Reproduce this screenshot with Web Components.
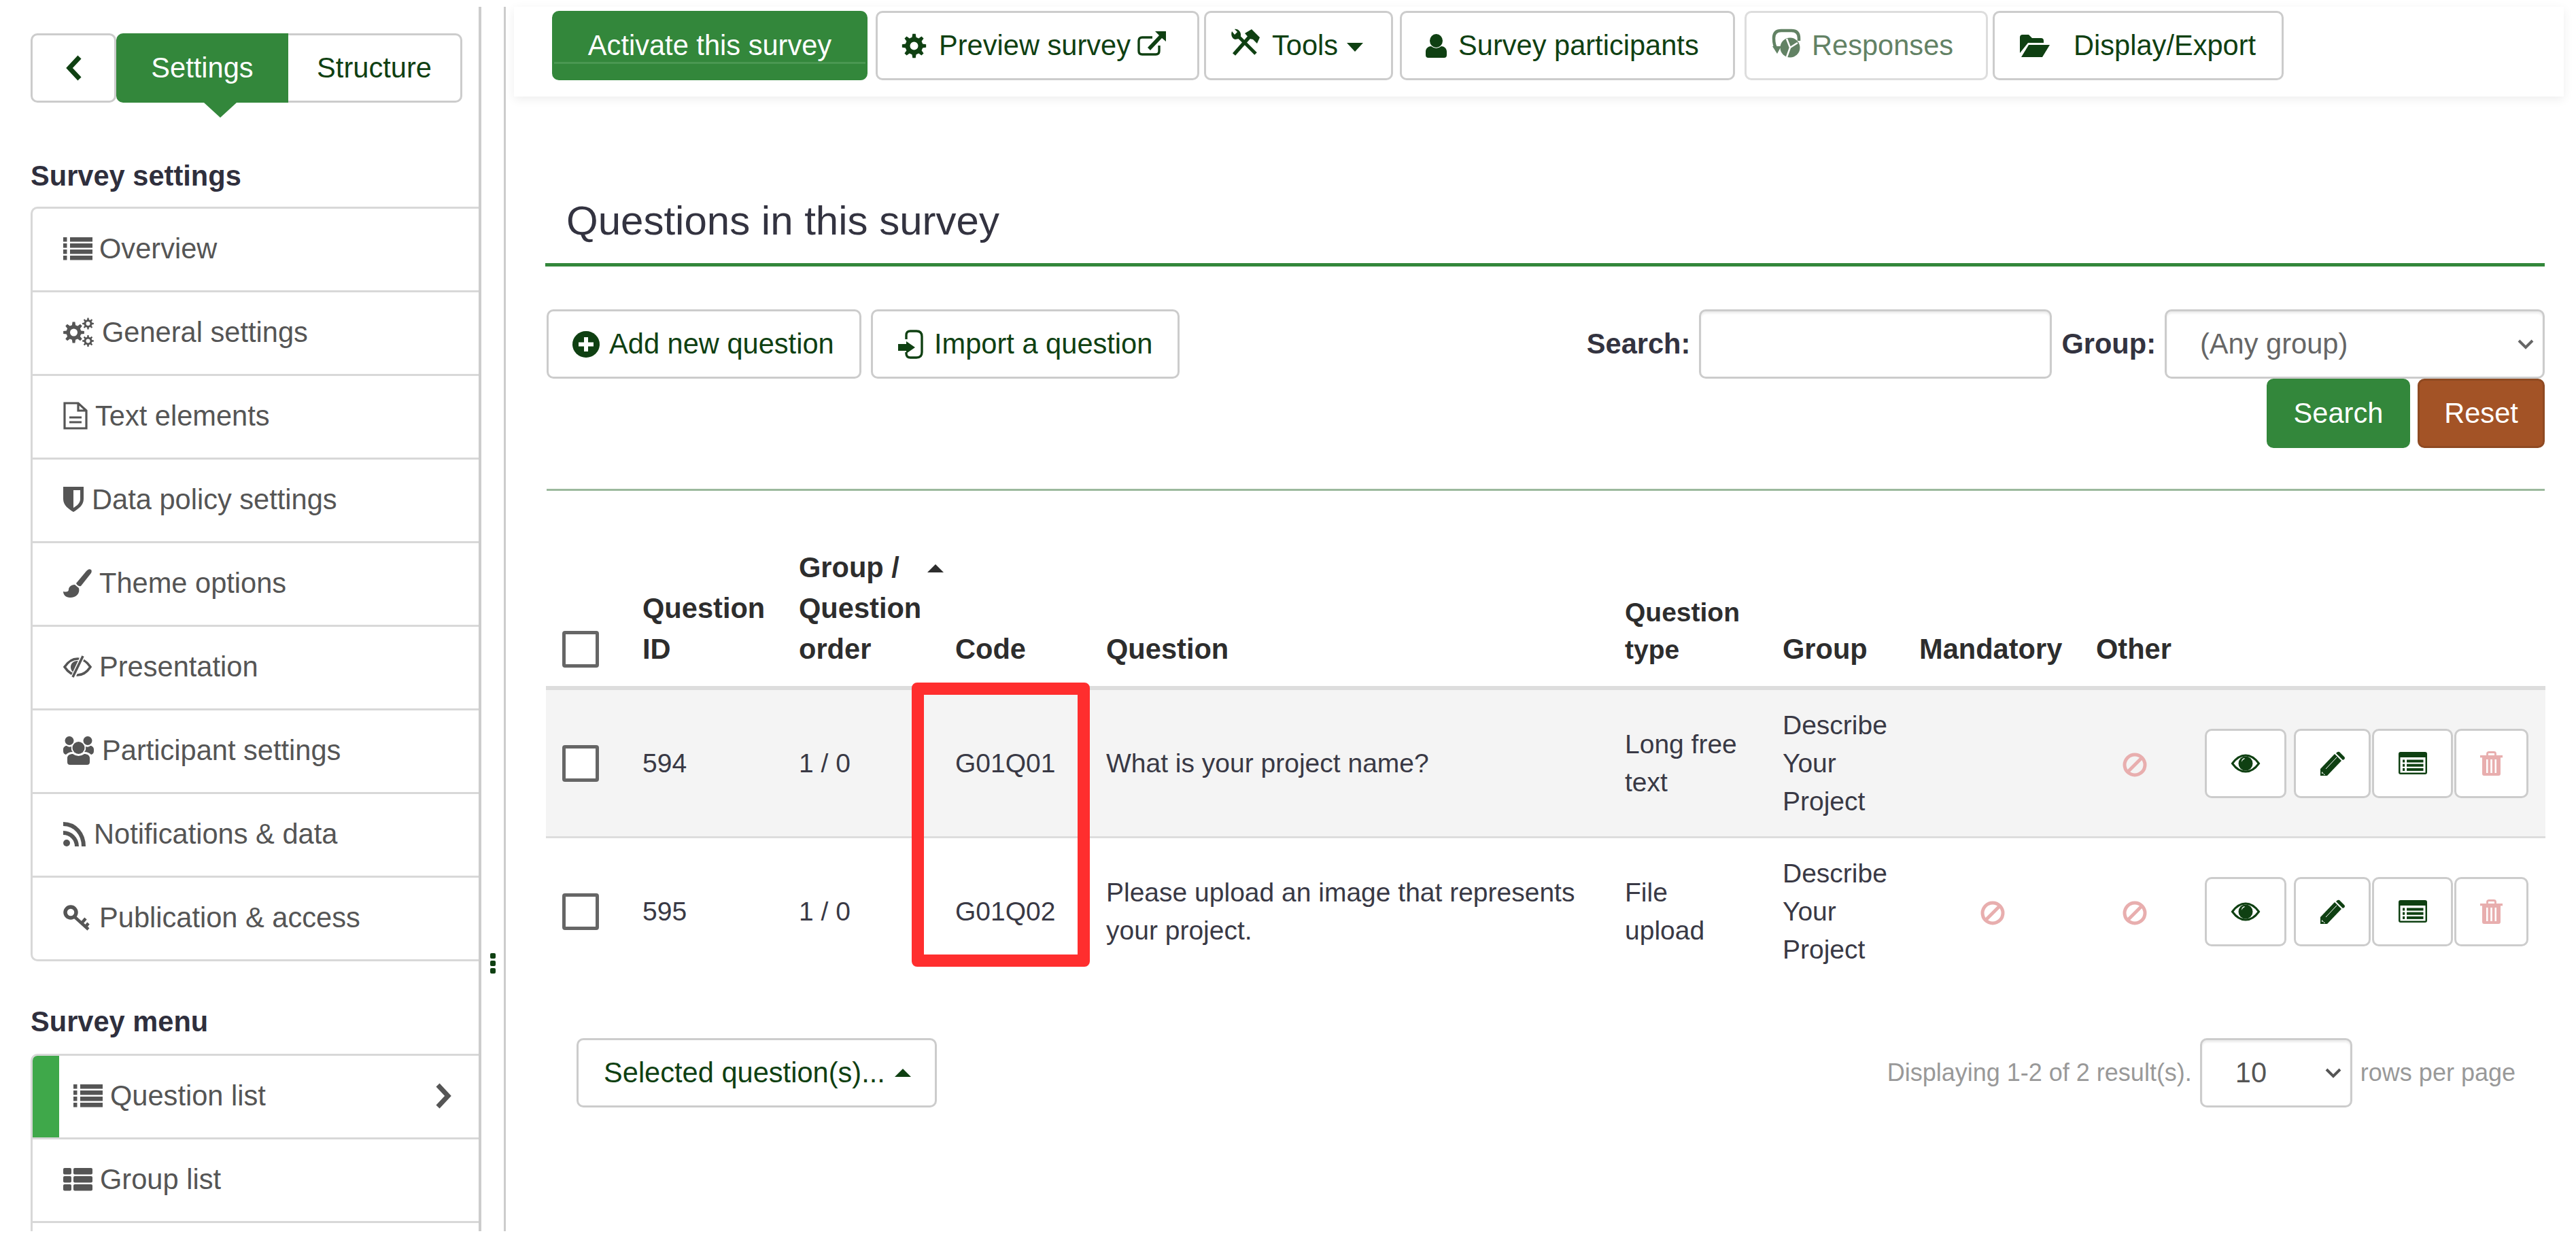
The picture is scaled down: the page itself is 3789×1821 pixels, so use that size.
<!DOCTYPE html>
<html lang="en">
<head>
<meta charset="utf-8">
<title>Questions in this survey</title>
<style>
  html, body { margin: 0; padding: 0; background: #fff; }
  body { font: 41.6px/60px "Liberation Sans", Arial, sans-serif; color: #333340; overflow: hidden; }
</style>
</head>
<body>
<ls-app></ls-app>
<script>
// gear outline used by the cog icons
function gear(cx, cy, R, r, n, hole) {
  const step = Math.PI * 2 / n;
  const pts = [];
  for (let i = 0; i < n; i++) {
    const a = step * i;
    [[-0.30, r], [-0.16, R], [0.16, R], [0.30, r]].forEach(([off, rad]) => {
      pts.push((cx + Math.cos(a + off * step) * rad).toFixed(2) + ' ' + (cy + Math.sin(a + off * step) * rad).toFixed(2));
    });
  }
  return 'M' + pts.join('L') + 'Z' +
    `M${cx - hole} ${cy}a${hole} ${hole} 0 1 0 ${hole * 2} 0a${hole} ${hole} 0 1 0 ${-hole * 2} 0Z`;
}

function rows(count, fn) {
  return Array.from({ length: count }, (_, i) => fn(i)).join('');
}

const ICONS = {
  list: [43, 33, rows(4, i => `<rect x="0" y="${i * 9}" width="5.5" height="6.5"/><rect x="10" y="${i * 9}" width="33" height="6.5"/>`)],
  thlist: [43, 33, rows(3, i => `<rect x="0" y="${i * 12}" width="12" height="9.5" rx="2"/><rect x="15" y="${i * 12}" width="28" height="9.5" rx="2"/>`)],
  gears: [45, 42, `<path fill-rule="evenodd" d="${gear(15.5, 21, 15.5, 11, 8, 5.5)}"/><path fill-rule="evenodd" d="${gear(36.5, 8, 8.5, 6, 8, 3)}"/><path fill-rule="evenodd" d="${gear(36.5, 33.5, 8.5, 6, 8, 3)}"/>`],
  doc: [36, 41, `<path fill="none" stroke="currentColor" stroke-width="3.2" d="M2 2H22L34 13V39H2ZM22 2V13H34M9 23H27M9 30H27"/>`],
  shield: [30, 37, `<path fill-rule="evenodd" d="M0 0H30V18C30 27 22 33 15 37C8 33 0 27 0 18ZM15 5V31C20 28 25 24 25 18V5Z"/>`],
  brush: [42, 42, `<path d="M41 1C38-1 36 1 34 3L19 21C21 25 24 26 26 25L41 6C42 4 42 2 41 1Z"/><path d="M17 23C11 23 8 27 8 30C8 34 4 34 0 33C0 38 4 42 10 42C19 42 25 36 23 28Z"/>`],
  eyeslash: [42, 31, `<path fill="none" stroke="currentColor" stroke-width="3.6" d="M2 16C8 7 15 4 21 4C27 4 34 7 40 16C34 25 27 28 21 28C15 28 8 25 2 16Z"/><path d="M21 7C15 7 11 11 11 16C11 19 12 22 15 24L25 7Z"/><path stroke="#fff" stroke-width="7" d="M28 2L15 30"/><path stroke="currentColor" stroke-width="3.6" d="M29 0L14 31"/>`],
  users: [45, 43, `<circle cx="22.5" cy="18" r="9"/><circle cx="9" cy="7.5" r="6.5"/><circle cx="36" cy="7.5" r="6.5"/><path d="M6 39V33C6 29 10 27 14 27Q22.5 33 31 27C35 27 39 29 39 33V39Q39 43 35 43H10Q6 43 6 39Z"/><path d="M0 23V20C0 17 3 15 5 15Q9 18 12 16Q11 21 14 24C9 24 6 26 4 28Q0 27 0 23Z"/><path d="M45 23V20C45 17 42 15 40 15Q36 18 33 16Q34 21 31 24C36 24 39 26 41 28Q45 27 45 23Z"/>`],
  rss: [33, 36, `<circle cx="5" cy="31" r="5"/><path fill="none" stroke="currentColor" stroke-width="6" d="M0 16C11 16 20 25 20 36M0 3C18 3 30 18 30 36"/>`],
  key: [39, 37, `<circle cx="11" cy="11" r="8" fill="none" stroke="currentColor" stroke-width="5.5"/><path fill="none" stroke="currentColor" stroke-width="4.5" d="M16 17L37 36M27 27L33 20M33 32L37 27"/>`],
  chevronleft: [24, 38, `<path fill="none" stroke="currentColor" stroke-width="7" d="M21 3L6 19L21 35"/>`],
  chevronright: [25, 38, `<path fill="none" stroke="currentColor" stroke-width="7" d="M4 3L19 19L4 35"/>`],
  cog: [37, 35, `<path fill-rule="evenodd" d="${gear(18.5, 17.5, 17.8, 13, 8, 6)}"/>`],
  external: [42, 36, `<path fill="none" stroke="currentColor" stroke-width="3.4" d="M22 9H7Q2 9 2 14V29Q2 34 7 34H27Q32 34 32 29V21"/><path d="M26 0H42V15L36 10L19 28L15 24L32 6Z"/>`],
  // crossed hammer and wrench
  tools: [42, 40, `<path fill="none" stroke="currentColor" stroke-width="5.5" d="M4 37L27 11"/><path d="M20 6L30 0L42 12L38 21L32 15L27 14Z"/><path fill="none" stroke="currentColor" stroke-width="5" d="M11 11L36 36"/><path d="M1 3L5 8L9 4L5 0C10-1 15 4 14 10L11 14L6 15C1 14-1 8 1 3Z"/>`],
  caretdown: [24, 13, `<path d="M0 0H24L12 13Z"/>`],
  caretup: [24, 12, `<path d="M12 0L24 12H0Z"/>`],
  user: [31, 35, `<ellipse cx="15.5" cy="10" rx="9.5" ry="10"/><path d="M0 31V26C0 21 4 18 8 18Q15.5 24 23 18C27 18 31 21 31 26V31Q31 35 27 35H4Q0 35 0 31Z"/>`],
  responses: [43, 42, `<path fill="none" stroke="currentColor" stroke-width="4.5" d="M8 31C4 27 3 21 3 14Q3 3 14 3H29Q40 3 40 14V18"/><path d="M1 26H14L8 37Z"/><circle cx="27" cy="28" r="14.5"/><path fill="none" stroke="#fff" stroke-width="2.5" d="M27 28L22 15M27 28L38 21M27 28L22 42"/>`],
  folder: [44, 33, `<path d="M0 27V4Q0 0 4 0H13L18 5H31Q35 5 35 9V12H12Z"/><path d="M2 33L13 15H44L33 33Z"/>`],
  plus: [40, 39, `<ellipse cx="20" cy="19.5" rx="20" ry="19.5"/><path fill="#fff" d="M17 9H23V16.5H31V22.5H23V30H17V22.5H9V16.5H17Z"/>`],
  importq: [37, 43, `<path fill="none" stroke="currentColor" stroke-width="3.4" d="M12 14V8Q12 2 18 2H27Q35 2 35 10V33Q35 41 27 41H18Q12 41 12 35V33"/><path d="M0 21H12V17L25 26L12 35V31H0Z"/>`],
  eye: [42, 28, `<path fill="none" stroke="currentColor" stroke-width="3" d="M1.5 14C8 5 15 2 21 2C27 2 34 5 40.5 14C34 23 27 26 21 26C15 26 8 23 1.5 14Z"/><circle cx="21" cy="14" r="10.5"/><path fill="#fff" d="M19 6C16 7 15 9 15 12C16 10 17 8 20 7Z"/>`],
  pencil: [36, 36, `<path d="M0 36V26L21 4L31 14L10 36Z"/><path d="M24 2Q26 0 28 1L35 8Q37 10 35 12L33 13L23 3Z"/><path fill="#fff" d="M2 30L7 35H5V32L2 33Z"/><path stroke="#fff" d="M8 26L24 9"/>`],
  listalt: [42, 33, `<rect width="42" height="33" rx="3"/><rect x="2.5" y="8" width="37" height="22.5" fill="#fff"/>` + rows(3, i => `<rect x="6" y="${11.5 + i * 6.2}" width="3.2" height="4"/><rect x="12" y="${11.5 + i * 6.2}" width="24.5" height="4"/>`)],
  trash: [33, 36, `<rect y="6" width="33" height="3.4"/><path fill="none" stroke="currentColor" stroke-width="2.8" d="M10.5 6V3.5Q10.5 1.5 13 1.5H20Q22.5 1.5 22.5 3.5V6"/><path fill-rule="evenodd" d="M3 9H30V33Q30 36 27 36H6Q3 36 3 33ZM9 12V32H11.5V12ZM15.2 12V32H17.8V12ZM21.5 12V32H24V12Z"/>`],
  ban: [36, 36, `<circle cx="18" cy="18" r="15" fill="none" stroke="currentColor" stroke-width="5"/><path stroke="currentColor" stroke-width="5" d="M28 8L8 28"/>`],
  chevrondown: [24, 15, `<path fill="none" stroke="currentColor" stroke-width="4" d="M2 2L12 12L22 2"/>`]
};

class LsIcon extends HTMLElement {
  constructor() {
    super();
    this.attachShadow({ mode: 'open' });
  }

  connectedCallback() {
    const [w, h, body] = ICONS[this.getAttribute('name')];
    this.shadowRoot.innerHTML = `
      <style>
        :host { display: inline-flex; flex: none; }
        svg { display: block; fill: currentColor; overflow: visible; }
      </style>
      <svg width="${w}" height="${h}" viewBox="0 0 ${w} ${h}">${body}</svg>
    `;
  }
}

class LsBtn extends HTMLElement {
  constructor() {
    super();
    this.attachShadow({ mode: 'open' });
  }

  connectedCallback() {
    this.shadowRoot.innerHTML = `
      <style>
        :host {
          display: inline-flex;
          flex: none;
          position: relative;
          box-sizing: border-box;
          height: 102px;
          align-items: center;
          padding: 0 37px;
          border: 3px solid #ccc;
          border-radius: 10px;
          background: #fff;
          color: #0f4012;
          white-space: nowrap;
        }
        :host([variant="primary"]) { background: #33873b; border-color: #33873b; color: #fff; }
        :host([variant="reset"]) { background: #a35326; border-color: #8f4a22; color: #fff; }
        :host([disabled]) { opacity: .65; }
        :host([centered]) { justify-content: center; padding: 0; }
        :host([underlined])::after {
          content: "";
          position: absolute;
          left: 0;
          right: 0;
          top: 72px;
          height: 3px;
          background: #4a9751;
        }
      </style>
      <slot></slot>
    `;
  }
}

class LsSelect extends HTMLElement {
  constructor() {
    super();
    this.attachShadow({ mode: 'open' });
  }

  connectedCallback() {
    this.shadowRoot.innerHTML = `
      <style>
        :host {
          display: flex;
          flex: none;
          box-sizing: border-box;
          height: 102px;
          align-items: center;
          justify-content: space-between;
          padding: 0 13px 0 49px;
          border: 3px solid #ccc;
          border-radius: 10px;
          background: #fff;
          box-shadow: inset 0 3px 3px rgba(0, 0, 0, .075);
          color: #666;
        }
      </style>
      <span><slot></slot></span>
      <ls-icon name="chevrondown"></ls-icon>
    `;
  }
}

class LsMenuItem extends HTMLElement {
  constructor() {
    super();
    this.attachShadow({ mode: 'open' });
  }

  connectedCallback() {
    const active = this.hasAttribute('active');
    this.shadowRoot.innerHTML = `
      <style>
        :host {
          display: flex;
          box-sizing: border-box;
          height: 123px;
          padding-bottom: 3px;
          align-items: center;
          border-bottom: 3px solid #d8d8d8;
          color: #555;
        }
        :host(:last-child) { border-bottom: 0; height: 120px; }
        .bar { align-self: stretch; width: 39px; margin-bottom: -3px; background: #3fa84a; margin-right: 21px; }
        .lead { width: 45px; }
        .arrow { margin-left: auto; margin-right: 39px; }
        ls-icon { margin-right: ${this.getAttribute('gap') || 10}px; }
      </style>
      ${active ? '<span class="bar"></span>' : '<span class="lead"></span>'}
      <ls-icon name="${this.getAttribute('icon')}"></ls-icon>
      <span><slot></slot></span>
      ${active ? '<ls-icon class="arrow" name="chevronright"></ls-icon>' : ''}
    `;
  }
}

class LsMenuList extends HTMLElement {
  constructor() {
    super();
    this.attachShadow({ mode: 'open' });
  }

  connectedCallback() {
    this.shadowRoot.innerHTML = `
      <style>
        :host {
          display: block;
          border: 3px solid #d8d8d8;
          border-right: 0;
          border-radius: 10px 0 0 10px;
          overflow: hidden;
        }
      </style>
      <slot></slot>
    `;
  }
}

class LsSidebar extends HTMLElement {
  constructor() {
    super();
    this.attachShadow({ mode: 'open' });
  }

  connectedCallback() {
    this.shadowRoot.innerHTML = `
      <style>
        :host {
          display: block;
          flex: none;
          box-sizing: border-box;
          width: 708px;
          height: 100%;
          padding: 39px 0 0 45px;
          border-right: 4px solid #ccc;
          overflow: hidden;
        }
        .switch { display: flex; height: 102px; }
        .back { width: 126px; justify-content: center; padding: 0; }
        .settings { width: 253px; border-radius: 10px 0 0 10px; justify-content: center; padding: 0; }
        .settings-wrap { position: relative; display: flex; }
        .pointer {
          position: absolute;
          left: 129px;
          top: 102px;
          width: 0;
          height: 0;
          border-left: 24px solid transparent;
          border-right: 24px solid transparent;
          border-top: 22px solid #33873b;
        }
        .structure { width: 256px; border-left: 0; border-radius: 0 10px 10px 0; justify-content: center; padding: 0; }
        h4 { margin: 78px 0 15px; font-size: 41.6px; line-height: 60px; font-weight: bold; color: #2f2f3d; }
        h4.second { margin-top: 59px; margin-bottom: 17px; }
      </style>
      <div class="switch">
        <ls-btn class="back"><ls-icon name="chevronleft"></ls-icon></ls-btn>
        <div class="settings-wrap">
          <ls-btn class="settings" variant="primary">Settings</ls-btn>
          <span class="pointer"></span>
        </div>
        <ls-btn class="structure">Structure</ls-btn>
      </div>
      <h4>Survey settings</h4>
      <ls-menu-list>
        <ls-menu-item icon="list" gap="10">Overview</ls-menu-item>
        <ls-menu-item icon="gears" gap="12">General settings</ls-menu-item>
        <ls-menu-item icon="doc" gap="11">Text elements</ls-menu-item>
        <ls-menu-item icon="shield" gap="12">Data policy settings</ls-menu-item>
        <ls-menu-item icon="brush" gap="11">Theme options</ls-menu-item>
        <ls-menu-item icon="eyeslash" gap="11">Presentation</ls-menu-item>
        <ls-menu-item icon="users" gap="12">Participant settings</ls-menu-item>
        <ls-menu-item icon="rss" gap="12">Notifications &amp; data</ls-menu-item>
        <ls-menu-item icon="key" gap="14">Publication &amp; access</ls-menu-item>
      </ls-menu-list>
      <h4 class="second">Survey menu</h4>
      <ls-menu-list>
        <ls-menu-item icon="list" gap="11" active>Question list</ls-menu-item>
        <ls-menu-item icon="thlist" gap="11">Group list</ls-menu-item>
        <ls-menu-item icon="thlist" gap="11"></ls-menu-item>
      </ls-menu-list>
    `;
  }
}

class LsHandle extends HTMLElement {
  constructor() {
    super();
    this.attachShadow({ mode: 'open' });
  }

  connectedCallback() {
    this.shadowRoot.innerHTML = `
      <style>
        :host {
          display: flex;
          flex: none;
          flex-direction: column;
          align-items: center;
          gap: 3px;
          box-sizing: border-box;
          width: 36px;
          height: 100%;
          padding: 1392px 0 0 0;
          border-right: 3px solid #ccc;
        }
        i { display: block; width: 8px; height: 8px; border-radius: 2px; background: #0f4012; }
      </style>
      <i></i><i></i><i></i>
    `;
  }
}

class LsTopbar extends HTMLElement {
  constructor() {
    super();
    this.attachShadow({ mode: 'open' });
  }

  connectedCallback() {
    this.shadowRoot.innerHTML = `
      <style>
        :host {
          display: flex;
          box-sizing: border-box;
          height: 132px;
          margin: 0 18px 0 12px;
          padding: 6px 0 0 56px;
          background: #fff;
          box-shadow: 0 4px 14px rgba(0, 0, 0, .07);
        }
      </style>
      <ls-btn variant="primary" underlined centered style="width:464px">Activate this survey</ls-btn>
      <ls-btn style="width:476px;margin-left:12px;padding-left:35px">
        <ls-icon name="cog" style="margin-right:18px"></ls-icon>Preview survey<ls-icon name="external" style="margin:-6px 0 0 10px"></ls-icon>
      </ls-btn>
      <ls-btn style="width:278px;margin-left:7px">
        <ls-icon name="tools" style="margin:-8px 18px 0 0"></ls-icon>Tools<ls-icon name="caretdown" style="margin:4px 0 0 13px"></ls-icon>
      </ls-btn>
      <ls-btn style="width:493px;margin-left:10px;padding-left:35px">
        <ls-icon name="user" style="margin-right:17px"></ls-icon>Survey participants
      </ls-btn>
      <ls-btn disabled style="width:358px;margin-left:14px">
        <ls-icon name="responses" style="margin:-8px 16px 0 0"></ls-icon>Responses
      </ls-btn>
      <ls-btn style="width:428px;margin-left:7px">
        <ls-icon name="folder" style="margin-right:35px"></ls-icon>Display/Export
      </ls-btn>
    `;
  }
}

const QUESTIONS = [
  { id: '594', order: '1 / 0', code: 'G01Q01', title: 'What is your project name?', type: 'Long free text', mandatory: false },
  { id: '595', order: '1 / 0', code: 'G01Q02', title: 'Please upload an image that represents your project.', type: 'File upload', mandatory: true }
];

class LsQuestionTable extends HTMLElement {
  constructor() {
    super();
    this.attachShadow({ mode: 'open' });
  }

  connectedCallback() {
    const body = QUESTIONS.map(q => `
      <tr>
        <td class="check"><span class="box"></span></td>
        <td>${q.id}</td>
        <td>${q.order}</td>
        <td>${q.code}</td>
        <td>${q.title}</td>
        <td>${q.type}</td>
        <td>Describe Your Project</td>
        <td class="mid">${q.mandatory ? '<ls-icon class="off" name="ban"></ls-icon>' : ''}</td>
        <td class="mid"><ls-icon class="off" name="ban"></ls-icon></td>
        <td class="actions">
          <div>
            <ls-btn centered style="width:120px;margin-right:11px"><ls-icon name="eye"></ls-icon></ls-btn>
            <ls-btn centered style="width:113px;margin-right:2px"><ls-icon name="pencil"></ls-icon></ls-btn>
            <ls-btn centered style="width:119px;margin-right:2px"><ls-icon name="listalt"></ls-icon></ls-btn>
            <ls-btn centered style="width:109px"><ls-icon class="off" name="trash"></ls-icon></ls-btn>
          </div>
        </td>
      </tr>
    `).join('');

    this.shadowRoot.innerHTML = `
      <style>
        :host { display: block; position: relative; width: 2941px; margin: 83px 0 0 1px; }
        table { width: 100%; table-layout: fixed; border-collapse: separate; border-spacing: 0; }
        th {
          padding: 0 22px 24px;
          text-align: left;
          vertical-align: bottom;
          font-size: 41.6px;
          line-height: 60px;
          font-weight: bold;
          color: #2d2d2d;
          border-bottom: 6px solid #ddd;
        }
        th.small { font-size: 39px; line-height: 55px; padding-bottom: 26px; }
        td { padding: 23.5px 22px; font-size: 39px; line-height: 56px; color: #393945; vertical-align: middle; }
        tbody tr:first-child td { background: #f4f4f4; border-bottom: 3px solid #ddd; }
        th.check, td.check { padding-left: 24px; padding-right: 0; }
        .box {
          display: block;
          box-sizing: border-box;
          width: 54px;
          height: 54px;
          border: 5px solid #666;
          border-radius: 4px;
          background: #fff;
        }
        th .box { margin-bottom: 3px; }
        .nowrap { white-space: nowrap; }
        .sort { margin-left: 41px; color: #2d2d2d; vertical-align: 7px; }
        .mid { padding: 0; text-align: center; }
        .off { color: #e8aeae; vertical-align: middle; }
        .actions { padding: 0 25px 0 0; }
        .actions div { display: flex; justify-content: flex-end; }
        .marker {
          position: absolute;
          left: 538px;
          top: 199px;
          box-sizing: border-box;
          width: 262px;
          height: 418px;
          border: 18px solid #ff2e2e;
          border-radius: 8px;
        }
      </style>
      <table>
        <colgroup>
          <col style="width:120px"><col style="width:230px"><col style="width:230px"><col style="width:222px">
          <col style="width:763px"><col style="width:232px"><col style="width:201px"><col style="width:260px">
          <col style="width:158px"><col style="width:525px">
        </colgroup>
        <thead>
          <tr>
            <th class="check"><span class="box"></span></th>
            <th>Question ID</th>
            <th><span class="nowrap">Group /<ls-icon class="sort" name="caretup"></ls-icon></span><br>Question order</th>
            <th>Code</th>
            <th>Question</th>
            <th class="small">Question type</th>
            <th>Group</th>
            <th>Mandatory</th>
            <th>Other</th>
            <th></th>
          </tr>
        </thead>
        <tbody>${body}</tbody>
      </table>
      <div class="marker"></div>
    `;
  }
}

class LsQuestions extends HTMLElement {
  constructor() {
    super();
    this.attachShadow({ mode: 'open' });
  }

  connectedCallback() {
    this.shadowRoot.innerHTML = `
      <style>
        :host { display: block; width: 2941px; margin-left: 58px; }
        h3 {
          margin: 150px 0 0;
          padding: 0 0 29px 31px;
          font-size: 60px;
          line-height: 66px;
          font-weight: normal;
          color: #333340;
          border-bottom: 5px solid #33873b;
        }
        .tools { display: flex; justify-content: space-between; align-items: flex-start; margin: 63px 0 0 2px; }
        .left { display: flex; gap: 14px; }
        .filter { display: flex; flex-direction: column; align-items: flex-end; }
        .fields { display: flex; align-items: center; }
        label { font-weight: bold; margin-right: 13px; color: #333340; }
        input {
          box-sizing: border-box;
          width: 519px;
          height: 102px;
          margin-right: 14px;
          border: 3px solid #ccc;
          border-radius: 10px;
          box-shadow: inset 0 3px 3px rgba(0, 0, 0, .075);
        }
        .group { width: 559px; }
        .buttons { display: flex; gap: 11px; }
        hr { height: 3px; margin: 60px 0 0 2px; border: 0; background: #9bb99d; }
        .footer { display: flex; justify-content: space-between; align-items: center; margin: 79px 43px 0 46px; }
        .pager { display: flex; align-items: center; gap: 12px; font-size: 36px; color: #999; }
        .rows { width: 224px; font-size: 41.6px; color: #555; }
      </style>
      <h3>Questions in this survey</h3>
      <div class="tools">
        <div class="left">
          <ls-btn style="width:463px;padding-left:35px">
            <ls-icon name="plus" style="margin-right:14px"></ls-icon>Add new question
          </ls-btn>
          <ls-btn style="width:454px;padding-left:37px">
            <ls-icon name="importq" style="margin-right:16px"></ls-icon>Import a question
          </ls-btn>
        </div>
        <div class="filter">
          <div class="fields">
            <label>Search:</label><input type="text">
            <label>Group:</label><ls-select class="group">(Any group)</ls-select>
          </div>
          <div class="buttons">
            <ls-btn variant="primary" centered style="width:211px">Search</ls-btn>
            <ls-btn variant="reset" centered style="width:187px">Reset</ls-btn>
          </div>
        </div>
      </div>
      <hr>
      <ls-question-table></ls-question-table>
      <div class="footer">
        <ls-btn style="width:530px">
          Selected question(s)...<ls-icon name="caretup" style="margin-left:14px"></ls-icon>
        </ls-btn>
        <div class="pager">
          <span>Displaying 1-2 of 2 result(s).</span>
          <ls-select class="rows">10</ls-select>
          <span>rows per page</span>
        </div>
      </div>
    `;
  }
}

class LsApp extends HTMLElement {
  constructor() {
    super();
    this.attachShadow({ mode: 'open' });
  }

  connectedCallback() {
    this.shadowRoot.innerHTML = `
      <style>
        :host {
          display: flex;
          box-sizing: border-box;
          height: 1821px;
          padding: 10px 0;
          overflow: hidden;
        }
        main { flex: 1; min-width: 0; }
      </style>
      <ls-sidebar></ls-sidebar>
      <ls-handle></ls-handle>
      <main>
        <ls-topbar></ls-topbar>
        <ls-questions></ls-questions>
      </main>
    `;
  }
}

customElements.define('ls-icon', LsIcon);
customElements.define('ls-btn', LsBtn);
customElements.define('ls-select', LsSelect);
customElements.define('ls-menu-item', LsMenuItem);
customElements.define('ls-menu-list', LsMenuList);
customElements.define('ls-sidebar', LsSidebar);
customElements.define('ls-handle', LsHandle);
customElements.define('ls-topbar', LsTopbar);
customElements.define('ls-question-table', LsQuestionTable);
customElements.define('ls-questions', LsQuestions);
customElements.define('ls-app', LsApp);
</script>
</body>
</html>
